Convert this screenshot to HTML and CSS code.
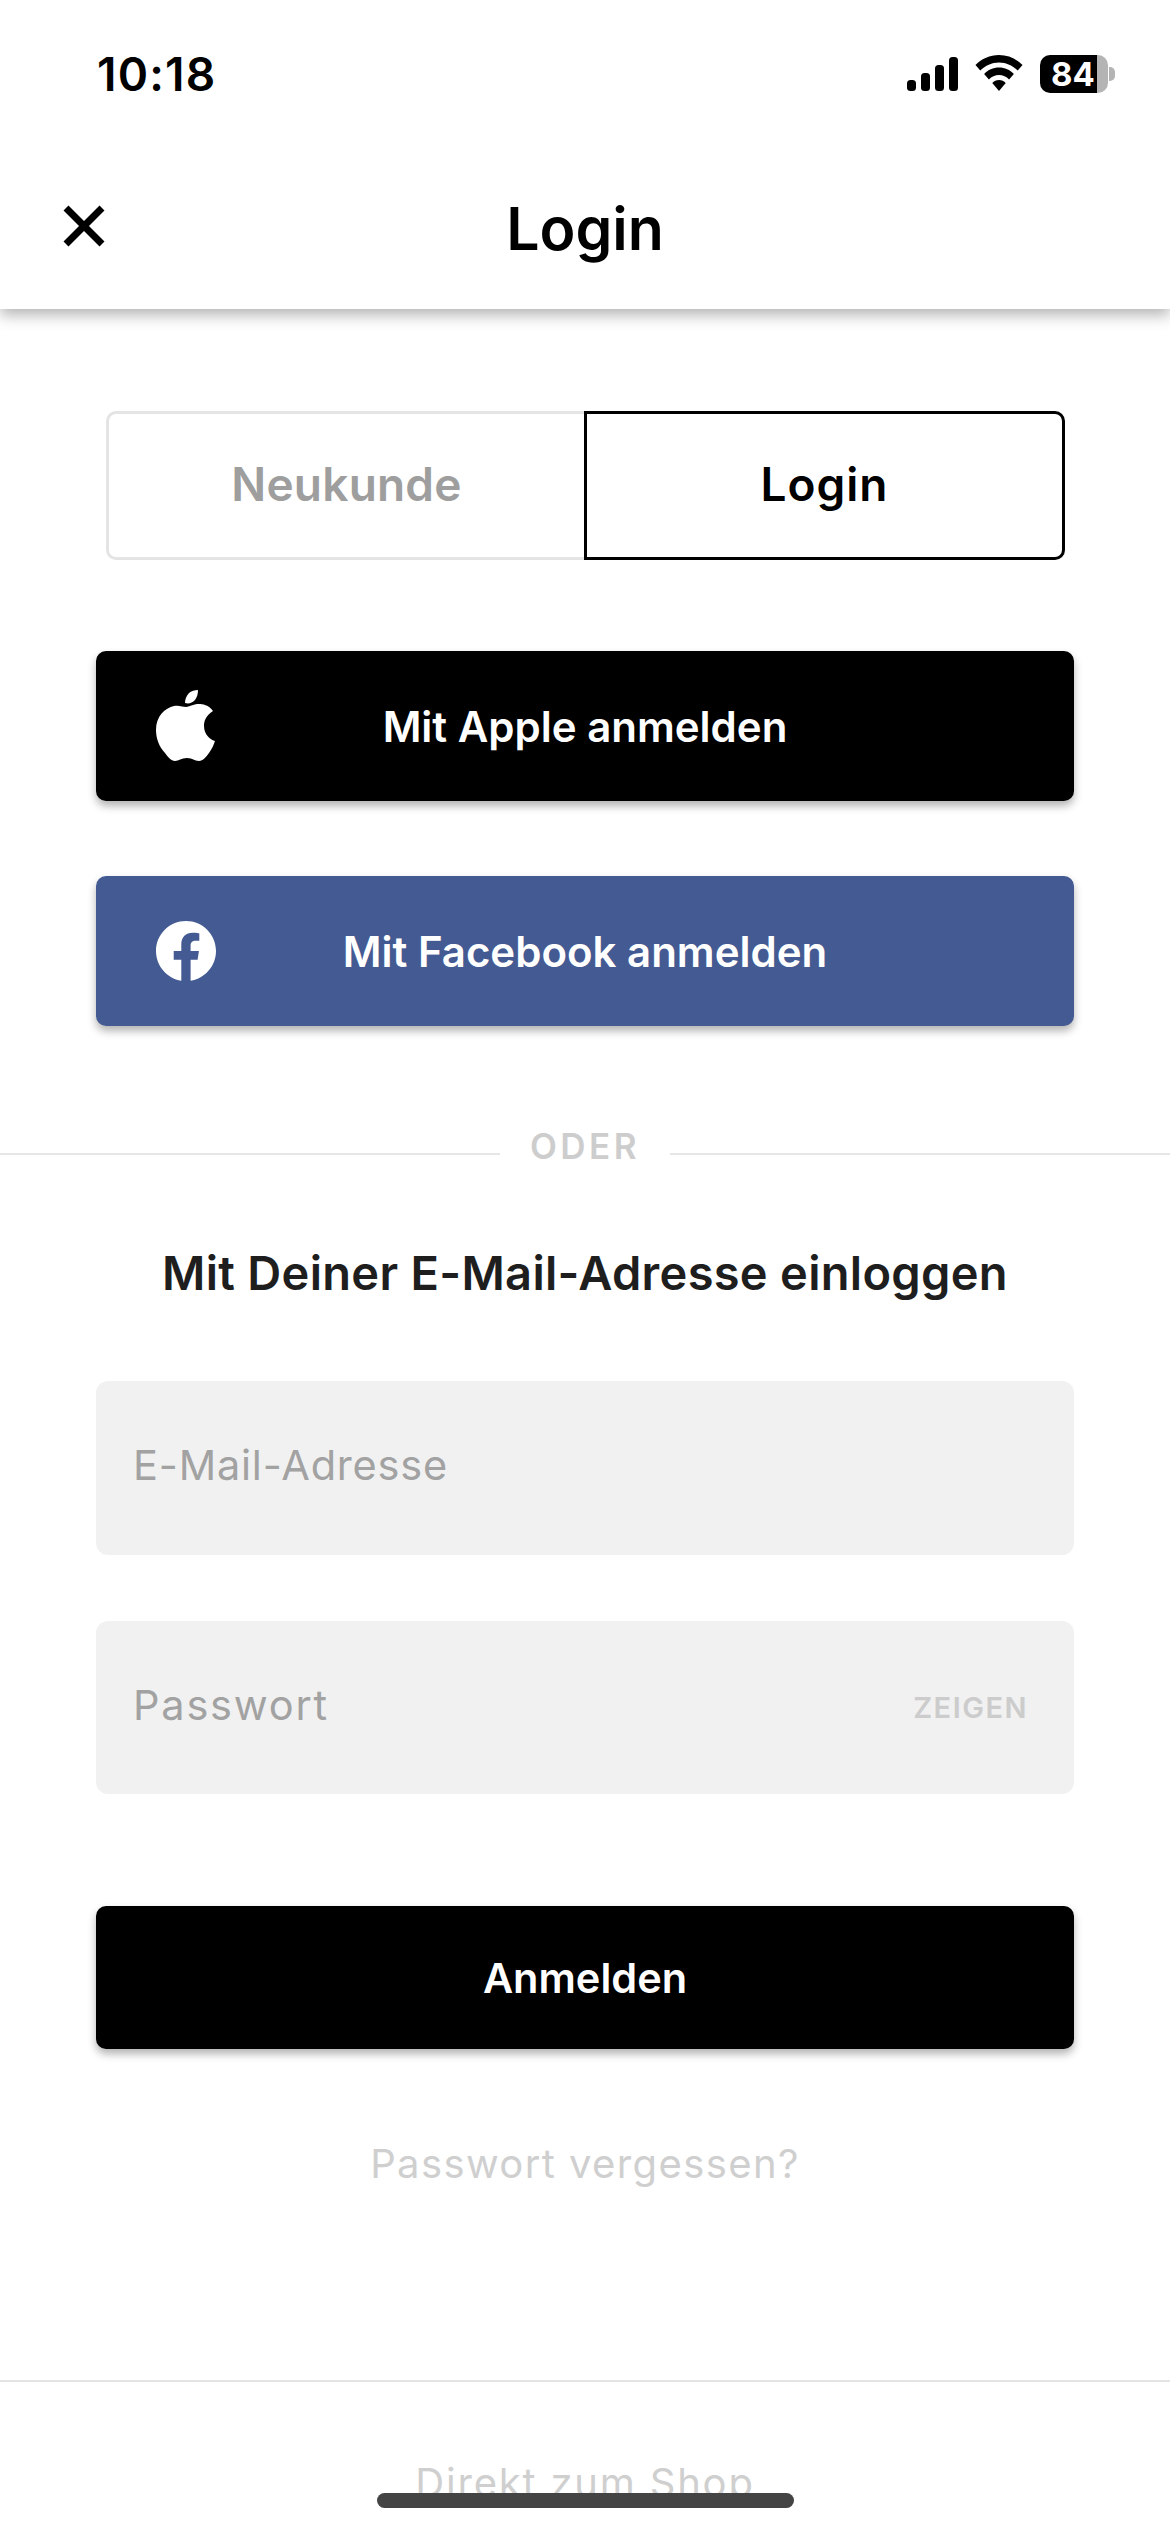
FILE: index.html
```html
<!DOCTYPE html>
<html lang="de">
<head>
<meta charset="utf-8">
<title>Login</title>
<link rel="stylesheet" href="styles.css">
</head>
<body>
<div class="phone">
  <header class="top">
    <div class="status">
      <span class="time">10:18</span>
      <div class="status-icons">
        <svg class="signal" width="51" height="34" viewBox="0 0 51 34"><rect x="0" y="23" width="9" height="11" rx="3.5"/><rect x="14" y="16" width="9" height="18" rx="3.5"/><rect x="28" y="8" width="9" height="26" rx="3.5"/><rect x="42" y="0" width="9" height="34" rx="3.5"/></svg>
        <svg class="wifi" width="48" height="36" viewBox="0 0 50 36" preserveAspectRatio="none"><path d="M25 0C15.500 0 7 3.700 .5 10l5 5.500C10.800 10.500 17.500 7.500 25 7.500s14.200 3 19.500 8l5-5.500C43 3.700 34.500 0 25 0z"/><path d="M25 12.500c-6 0-11.500 2.400-15.500 6.400l5 5.500c2.700-2.800 6.400-4.400 10.500-4.400s7.800 1.600 10.500 4.400l5-5.500c-4-4-9.500-6.400-15.500-6.400z"/><path d="M25 25c-2.800 0-5.300 1.100-7 2.900L25 36l7-8.100C30.300 26.100 27.800 25 25 25z"/></svg>
        <div class="battery"><div class="batt-body"><span class="batt-num">84</span></div><div class="batt-cap"></div></div>
      </div>
    </div>
    <div class="nav">
      <svg class="close" width="42" height="42" viewBox="0 0 42 42"><path d="M3 3l36 36M39 3L3 39"/></svg>
      <h1 class="nav-title">Login</h1>
    </div>
  </header>
  <main class="content">
    <div class="tabs">
      <div class="tab tab-off">Neukunde</div>
      <div class="tab tab-on">Login</div>
    </div>
    <button class="btn btn-apple">
      <svg class="btn-icon" width="60" height="72" viewBox="0 0 60 72"><path d="M30 17c3-.1 7-3 13-3 3 0 10 .8 14 7-8 5-9 11-9 15 0 9 7 14 11 15-1 3-3 8-6 12-3 4-6 8-10 8-5 0-6-3-12-3-6 0-8 3-12 3s-7-4-10-8C3 57 0 48 0 40 0 26 9 18 18 16c5-1 9 1 12 1z"/><path d="M29 13c0-3 1-7 4-10 2-2 6-3 9-3 0 4-1 7-3 10-3 3-6 4-10 3z"/></svg>
      <span>Mit Apple anmelden</span>
    </button>
    <button class="btn btn-fb">
      <svg class="btn-icon" width="60" height="60" viewBox="0 0 60 60"><path d="M60 30C60 13.400 46.600 0 30 0S0 13.400 0 30c0 15 11 27.400 25.300 29.700V38.700h-7.600V30h7.600v-6.600c0-7.500 4.500-11.700 11.300-11.700 3.300 0 6.700.6 6.700.6v7.400h-3.800c-3.700 0-4.900 2.300-4.900 4.700V30h8.300l-1.300 8.700h-7v21C49 57.400 60 45 60 30z"/></svg>
      <span>Mit Facebook anmelden</span>
    </button>
    <div class="or"><span class="or-text">ODER</span></div>
    <h2 class="mail-title">Mit Deiner E-Mail-Adresse einloggen</h2>
    <div class="field"><span class="ph">E-Mail-Adresse</span></div>
    <div class="field field-2"><span class="ph ph-pass">Passwort</span><span class="show">ZEIGEN</span></div>
    <button class="btn btn-submit"><span>Anmelden</span></button>
    <div class="forgot">Passwort vergessen?</div>
  </main>
  <footer class="foot">
    <div class="shop">Direkt zum Shop</div>
    <div class="home-bar"></div>
  </footer>
</div>
</body>
</html>
```
FILE: styles.css
```css
* { box-sizing: border-box; }
html, body { margin: 0; padding: 0; background: #fff; }
body { font-family: "Inter", "Lato", sans-serif; color: #000; }
.phone { width: 1170px; height: 2532px; overflow: hidden; position: relative; display: flex; flex-direction: column; background: #fff; }

.top { height: 309px; flex: none; background: #fff; box-shadow: 0 6px 14px rgba(0,0,0,.3); position: relative; }
.status { height: 130px; display: flex; justify-content: space-between; padding: 54px 55px 0 97px; }
.time { font-family: "Inter", sans-serif; font-weight: 600; font-size: 46px; line-height: 40px; letter-spacing: 1.2px; }
.status-icons { display: flex; gap: 17px; height: 38px; align-items: flex-start; padding-top: 1px; }
.signal { margin-top: 2px; }
.wifi { margin-top: 0; }
.battery { display: flex; align-items: center; height: 38px; }
.batt-body { width: 68px; height: 38px; border-radius: 10px; background: linear-gradient(to right, #000 0, #000 57px, #b4b4b4 57px); padding-left: 11px; }
.batt-num { font-family: "Inter", sans-serif; font-weight: 700; font-size: 33px; line-height: 38px; color: #fff; display: block; }
.batt-cap { width: 6px; height: 14px; margin-left: 1px; background: #b4b4b4; border-radius: 0 5px 5px 0; }

.nav { height: 179px; position: relative; display: flex; justify-content: center; padding-top: 67px; }
.close { position: absolute; left: 63px; top: 75px; }
.close path { fill: none; stroke: #000; stroke-width: 7; }
.nav-title { margin: 0; font-size: 59px; line-height: 64px; font-weight: 600; }

.content { flex: 1; padding: 102px 96px 0; display: flex; flex-direction: column; }
.tabs { display: flex; height: 149px; margin: 0 9px 0 10px; flex: none; }
.tab { flex: 1; display: flex; align-items: center; justify-content: center; font-size: 46px; font-weight: 600; padding-bottom: 3px; }
.tab-off { border: 3px solid #e4e4e4; border-right: 0; border-radius: 10px 0 0 10px; color: #9e9e9e; letter-spacing: .2px; }
.tab-on { border: 3px solid #000; border-radius: 0 10px 10px 0; letter-spacing: 1px; }

.btn { border: 0; width: 100%; flex: none; border-radius: 10px; color: #fff; font-family: inherit; font-weight: 600; font-size: 42px; position: relative; display: flex; align-items: center; justify-content: center; padding: 0; }
.btn-apple { height: 150px; margin-top: 91px; background: #000; box-shadow: 0 5px 9px rgba(0,0,0,.3); }
.btn-fb { height: 150px; margin-top: 75px; background: #445a92; box-shadow: 0 5px 9px rgba(0,0,0,.3); }
.btn-icon { position: absolute; left: 60px; top: 50%; transform: translateY(-50%); fill: #fff; }
.btn-submit { height: 143px; margin-top: 112px; background: #000; box-shadow: 0 5px 9px rgba(0,0,0,.3); font-size: 41.500px; }

.or { height: 2px; margin: 127px -96px 0; background: #e6e6e6; display: flex; justify-content: center; align-items: center; flex: none; position: relative; }
.or-text { background: #fff; padding: 0 30px; font-size: 35px; line-height: 40px; font-weight: 600; color: #cdcdcd; letter-spacing: 3.500px; transform: translateY(-8px); }
.mail-title { margin: 90px 0 0; font-size: 47px; line-height: 56px; font-weight: 600; letter-spacing: .3px; text-align: center; color: #1e1e1e; flex: none; }

.field { height: 174px; margin-top: 80px; background: #f1f1f1; border-radius: 12px; display: flex; align-items: center; justify-content: space-between; padding: 0 46px 0 37px; flex: none; }
.field-2 { margin-top: 66px; height: 173px; }
.ph { font-size: 41.500px; letter-spacing: .8px; color: #a2a2a2; position: relative; top: -3px; }
.ph-pass { letter-spacing: 1.800px; }
.show { font-size: 29px; font-weight: 600; letter-spacing: 1.500px; color: #cccccc; }

.forgot { margin-top: 90px; font-size: 40px; line-height: 50px; letter-spacing: 1.400px; text-align: center; color: #cfcfcf; flex: none; }

.foot { position: absolute; left: 0; right: 0; top: 2380px; bottom: 0; border-top: 2px solid #e4e4e4; }
.shop { position: absolute; left: 0; right: 0; top: 74px; height: 44px; overflow: hidden; text-align: center; font-size: 40px; line-height: 54px; letter-spacing: 1.800px; color: #cfcfcf; }
.home-bar { position: absolute; left: 377px; width: 417px; top: 111px; height: 15px; border-radius: 8px; background: #444; }
```
